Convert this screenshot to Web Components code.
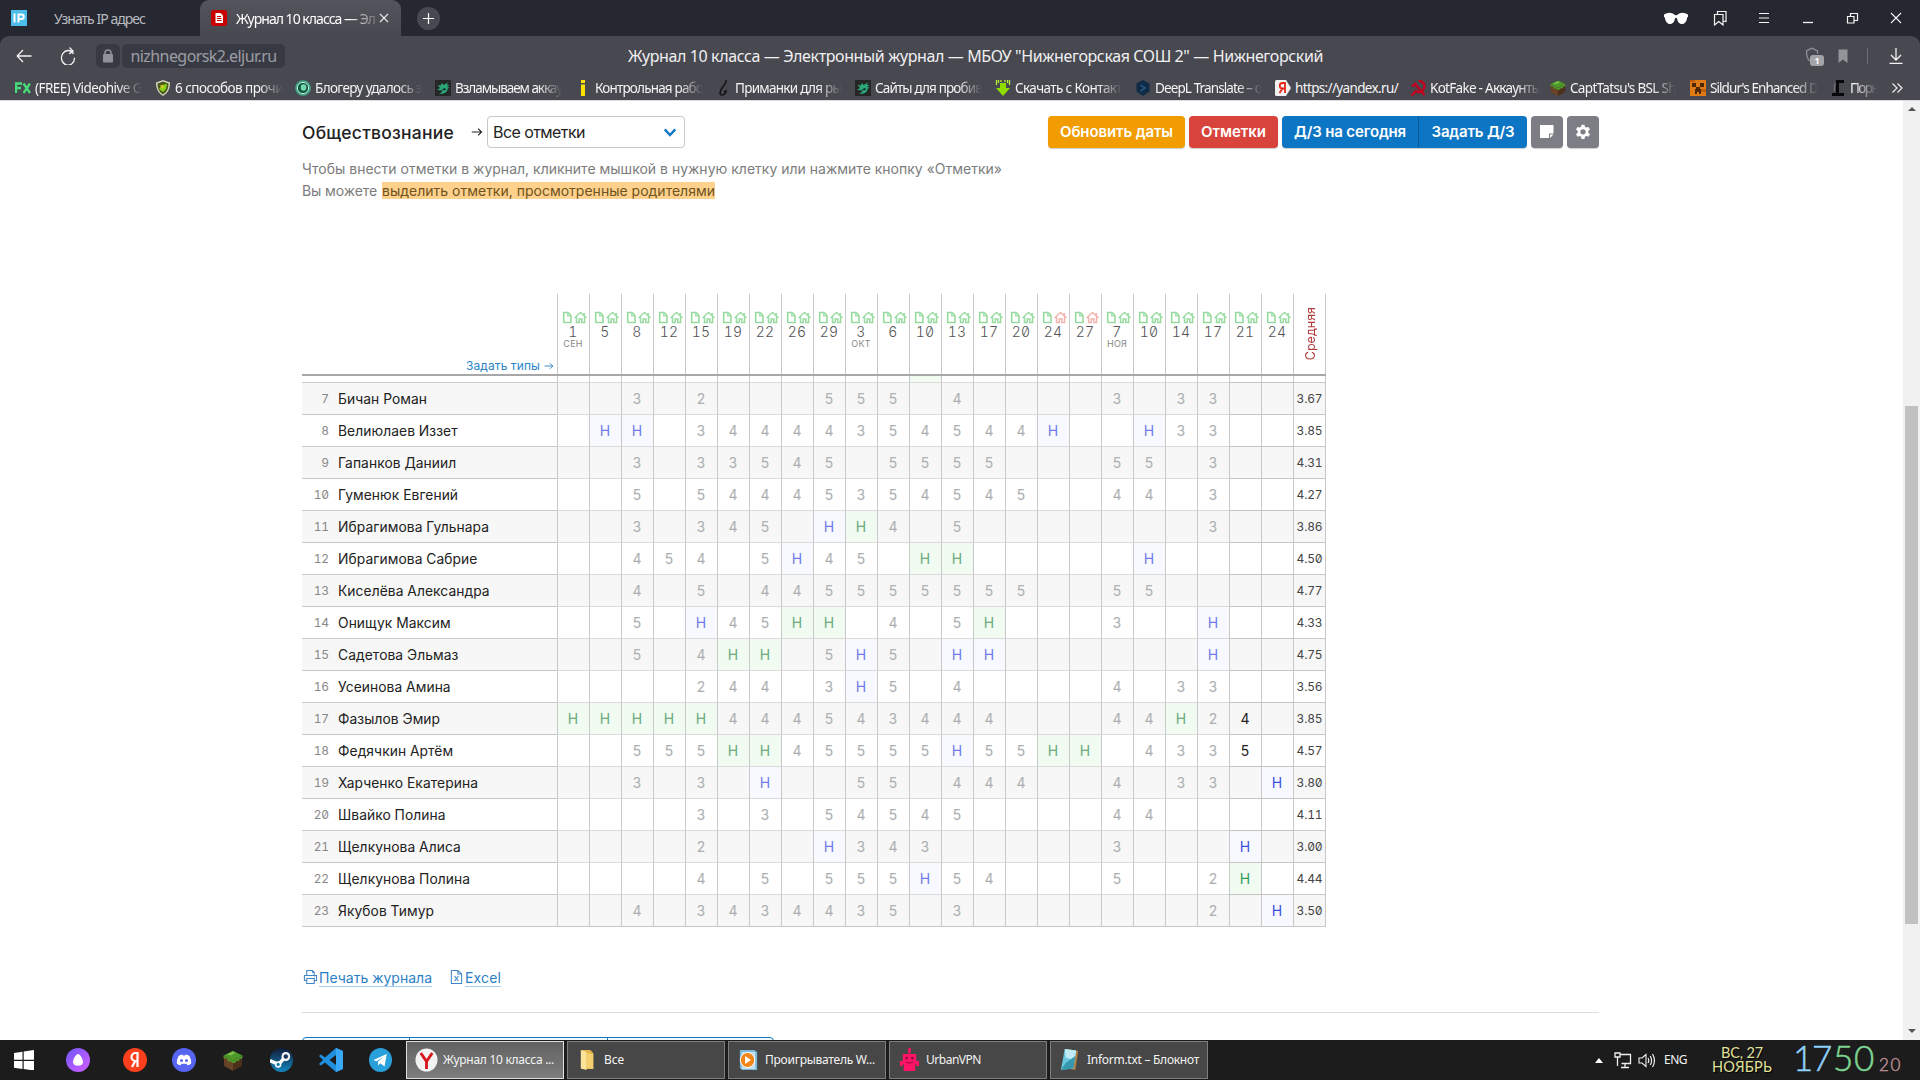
<!DOCTYPE html>
<html lang="ru">
<head>
<meta charset="utf-8">
<title>Журнал 10 класса</title>
<style>
html,body{margin:0;padding:0;background:#fff;overflow:hidden}
body{width:1920px;height:1080px;font-family:"Noto Sans","Open Sans",sans-serif}
</style>
</head>
<body>
<desktop-screen></desktop-screen>
<script>
const define=(name,html,init)=>customElements.define(name,class extends HTMLElement{
  connectedCallback(){
    if(this.shadowRoot)return;
    this.attachShadow({mode:'open'}).innerHTML=typeof html==='function'?html(this):html;
    if(init)init(this);
  }
});

/* ---------- icon set ---------- */
const eye='<rect width="16" height="16" fill="#262626"/><path d="M2.500 5l3 .5L7 3l1.500 2L13 2.500 12 5l2.500 0L12 7l2.500.5-2 1.500c0 3.500-4 5.500-8.500 4.500 2.500-.7 3.500-2 3.500-3L2 10l3-2z" fill="#2aa878"/><path d="M7 9.500l3-1.500 1 1.500-2 1z" fill="#123"/>';
const cube=(t,l,r)=>`<path d="M8 .5l7.500 3.700L8 8 .5 4.200z" fill="${t}"/><path d="M.5 4.200L8 8v8L1 12.200z" fill="${l}"/><path d="M15.500 4.200L8 8v8l7-3.800z" fill="${r}"/><path d="M.5 4.200L8 8l7.500-3.800v2L13 7v1.500l-2-.5-1 1.500L8 10 6 8.500 4.500 9 3 6.500.5 6z" fill="${t}"/><path d="M3 3.500l5-2.300 2 1-4 2z" fill="#7cc04a"/>`;
const ICONS={
 ip:'<rect width="16" height="16" fill="#4dbdea"/><path d="M3.500 3.500v9M7.500 12.500v-8h3a2.200 2.200 0 010 4.500h-3" fill="none" stroke="#fff" stroke-width="2"/>',
 journal:'<rect width="16" height="16" rx="2.500" fill="#c90000"/><path d="M4.500 3h5L12 5.500V13H4.500z" fill="#fff"/><path d="M6 6.500h4M6 8.500h4.500M6 10.500h4.500" stroke="#c90000"/>',
 x:'<path d="M4 4l8 8M12 4l-8 8" stroke="#e8e8ea" stroke-width="1.100"/>',
 back:'<path d="M15.500 8H1.500M7 2L1.200 8 7 14" fill="none" stroke="#f2f2f2" stroke-width="1.300"/>',
 reload:'<path d="M13.500 6.200A6.500 6.500 0 1 0 14.500 9.500M9.500.5l3.500 3.200-3.800 2.500" fill="none" stroke="#f2f2f2" stroke-width="1.300"/>',
 lock:'<rect x="3" y="6" width="10" height="8.500" rx="1" fill="#90929a"/><path d="M5 6.500V5a3 3 0 016 0v1.500" fill="none" stroke="#90929a" stroke-width="1.500"/>',
 fxs:'<path d="M1 13V3.500h6M1 8h5M8.500 3.500L15 13M15 3.500L8.500 13" fill="none" stroke="#45dc79" stroke-width="2.300"/>',
 shield:'<path d="M8 0l7 2.500c0 6-2 10.500-7 13.500C3 13 1 8.500 1 2.500z" fill="#d8d8c0"/><path d="M8 1.500l5.500 2c0 5-1.600 8.500-5.500 11-3.900-2.500-5.500-6-5.500-11z" fill="#4a5a1c"/><path d="M4 9L7 5l5-1-1 5-3 3z" fill="#87d51b"/><path d="M5 5l4 1-2 3z" fill="#e5c429"/>',
 orb:'<circle cx="8" cy="8" r="7.800" fill="#3fa983"/><circle cx="8" cy="8" r="6" fill="#0a5742"/><circle cx="8" cy="8" r="5.600" fill="none" stroke="#d1eee2"/><ellipse cx="8.500" cy="7.500" rx="2.800" ry="3.300" fill="#74d6ac"/>',
 eye,
 yel:'<path d="M6 0h4v3H6zM6 4.500h4V16H6z" fill="#ffe100"/>',
 hook:'<path d="M11 0c1 3-2 5-4 8s-3 7 0 7 4-3 4-4l-2 1" fill="none" stroke="#17171a" stroke-width="1.700"/>',
 down:'<path d="M5 3h6v5h4l-7 8-7-8h4z" fill="#8edc00"/><path d="M1.500 0v5M3.500 0v3M6 0v2M10 0v2M12.500 0v3M14.500 0v5" stroke="#b4ef39" stroke-width="1.300"/>',
 deepl:'<path d="M8 0l6.500 3.500v8L8 16l-6.500-4.500v-8z" fill="#0f2b46"/><path d="M5.500 5l4.500 3-4.500 3" fill="none" stroke="#2c618e" stroke-width="1.400"/>',
 yandex:'<path d="M0 1.500Q0 0 1.500 0H11l5 8-5 8H1.500Q0 16 0 14.500z" fill="#f1f1f1"/><path d="M10 13V3H7.500a2.500 2.500 0 000 5.500H10M7.500 8.500L4.500 13" fill="none" stroke="#e8271b" stroke-width="1.800"/>',
 sickle:'<path d="M8.500.5c6 1 7.500 6 4.500 9.500-2 2.500-5 2.500-7 1l-4.500 4.500M5 4l9.500 11M2 6.500L6.500 3" fill="none" stroke="#c5001f" stroke-width="2.300"/>',
 block:cube('#4d9a2b','#6a4427','#4d301c'),
 creeper:'<rect width="16" height="16" fill="#e07a14"/><path d="M0 0h5v2H0zM10 9h6v3h-6z" fill="#c05f0b"/><path d="M2 3h4v4H2zM10 3h4v4h-4zM6 7h4v2H6zM5 9h6v5H9v-2H7v2H5z" fill="#4c2803"/>',
 pipe:'<path d="M14 1.500H7.500v9.500M2 14.500h12M7.500 10v4" fill="none" stroke="#08080a" stroke-width="3"/><path d="M5 3l-1 8" stroke="#777"/>',
 chevs:'<path d="M3.500 3.500L8 8l-4.500 4.500M8.500 3.500L13 8l-4.500 4.500" fill="none" stroke="#eee" stroke-width="1.200"/>',
 glasses:'<path d="M0 3.500Q6-.0 11 4q1 .6 2 0Q18 0 24 3.500V6c-.5 0-1 .5-1 1.500-.5 3.500-2.500 5.500-5 5.500-3 0-4.500-2.500-5-5.500-.3-1-1.700-1-2 0-.5 3-2 5.500-5 5.500-2.500 0-4.500-2-5-5.500C1 6.500.5 6 0 6z" fill="#fff"/>',
 marks:'<path d="M5.500 4V1.500H14v10l-3-.5M2.500 4.500H11V15l-4.200-3.500L2.500 15z" fill="none" stroke="#f4f4f4" stroke-width="1.200"/>',
 menu:'<path d="M3 3.500h10M3 8h10M3 12.500h10" stroke="#f4f4f4" stroke-width="1.200"/>',
 min:'<path d="M3 12.500h10" stroke="#f4f4f4" stroke-width="1.300"/>',
 restore:'<path d="M6.500 6V3.500h7v7H10M3.500 6.500h6.500v6.500H3.500z" fill="none" stroke="#f4f4f4" stroke-width="1.200"/>',
 close:'<path d="M3 3l10 10M13 3L3 13" stroke="#f4f4f4" stroke-width="1.100"/>',
 prot:'<path d="M8 1l5.500 2.500v2.500M8 1L2.500 3.500c0 4 .5 7 3.500 9" fill="none" stroke="#92939a" stroke-width="1.200"/>',
 mark:'<path d="M3.500 1.500h9V15L8 11.500 3.500 15z" fill="#93949a"/>',
 dl:'<path d="M8 0v11.500M3 7l5 5 5-5M1.500 15.300h13" fill="none" stroke="#f2f2f2" stroke-width="1.300"/>',
 note:'<path d="M1 1h13.500v8.500H10V14H1z" fill="#fff"/><path d="M11 10.500h3.500L11 14z" fill="#fff"/>',
 gear:'<path d="M6.700 1h2.600l.4 1.900 1.300.7 1.900-.6 1.300 2.200-1.500 1.300v1.700l1.500 1.300-1.300 2.200-1.900-.6-1.300.7-.4 1.900H6.700l-.4-1.900-1.300-.7-1.900.6-1.300-2.200 1.500-1.300V6.500L1.800 5.200 3.100 3l1.900.6 1.300-.7zM8 5a2.300 2.300 0 100 4.700A2.300 2.300 0 008 5z" fill="#fff" fill-rule="evenodd" transform="translate(0 .5)"/>',
 doc:'<path d="M1.700 1.500h4.500L9 4.500v7H1.700z" fill="none" stroke="currentColor" stroke-width="1.600"/><path d="M5.800 1.500v3.300H9" fill="none" stroke="currentColor" stroke-width="1.300"/>',
 house:'<path d="M.5 7L6.500 1.500 12.500 7M2.500 6v5.400h2.700V8h2.600v3.400h2.700V6M10.300 2v2.500" fill="none" stroke="currentColor" stroke-width="1.500"/>',
 printer:'<path d="M4 6V1.500h6l2 2V6M4 11.500H1.500V6.500h13v5H12M4 9.500h8v5H4z" fill="none" stroke="#3e86c6" stroke-width="1.100"/><path d="M10 1.500v2h2M12 8h1" stroke="#3e86c6" fill="none"/>',
 excel:'<path d="M2.500 1.500h7l4 3.500v9.500h-11z M9.500 1.500V5h4" fill="none" stroke="#3e86c6" stroke-width="1.100"/><path d="M6 7l4 5M10 7l-4 5" stroke="#3e86c6" stroke-width="1.200"/>',
 win:'<path d="M0 3l8.500-1.200v8H0zM9.700 1.600L20 0v9.700H9.700zM0 11h8.500v8L0 17.800zM9.700 11H20v9.500l-10.300-1.500z" fill="#fff"/>',
 alice:'<defs><linearGradient id="a" x1="0" y1="0" x2="1" y2="1"><stop offset="0" stop-color="#6b55f5"/><stop offset=".5" stop-color="#a55bff"/><stop offset="1" stop-color="#d05cff"/></linearGradient></defs><circle cx="12" cy="12" r="12" fill="url(#a)"/><path d="M12 6c2 0 5 5.500 5 8s-2 3.700-5 3.700S7 16.500 7 14s3-8 5-8z" fill="#fff"/>',
 yared:'<circle cx="12" cy="12" r="12" fill="#fc3f1d"/><path d="M14.500 19V5h-2a4 4 0 000 8h2M12.300 13L9 19" fill="none" stroke="#fff" stroke-width="2.200"/>',
 discord:'<circle cx="12" cy="12" r="12" fill="#5865f2"/><path d="M6.500 8q2-1.500 4-1.500l.5 1h2l.5-1q2 0 4 1.500 2 4 1.700 7.500-1.700 1.500-3.700 1.700l-.9-1.500H9.400l-.9 1.500q-2-.2-3.700-1.700Q4.500 12 6.500 8z" fill="#fff"/><circle cx="9.500" cy="12.500" r="1.500" fill="#5865f2"/><circle cx="14.500" cy="12.500" r="1.500" fill="#5865f2"/>',
 steam:'<defs><linearGradient id="s" x1="0" y1="0" x2="0" y2="1"><stop offset="0" stop-color="#101b38"/><stop offset="1" stop-color="#1688c0"/></linearGradient></defs><circle cx="12" cy="12" r="12" fill="url(#s)"/><path d="M0 12.500l9 4 5-5.500" fill="none" stroke="#fff" stroke-width="3.500"/><circle cx="16.500" cy="8.500" r="4.500" fill="#fff"/><circle cx="16.500" cy="8.500" r="2.700" fill="#18305a" stroke="#fff" stroke-width=".8"/><circle cx="8.500" cy="16.500" r="3.300" fill="#fff"/><circle cx="8.500" cy="16.500" r="1.700" fill="#187bb0"/>',
 code:'<path d="M17 0l7 3v18l-7 3L6 14.500 2 17.500 0 16l4-4-4-4 2-1.500 4 3zM17 7l-6.500 5 6.500 5z" fill="#1f8fe0" fill-rule="evenodd"/><path d="M17 0l7 3v18l-7 3z" fill="#3aa9f5"/>',
 tg:'<circle cx="12" cy="12" r="12" fill="#29a0da"/><path d="M4.500 12L18.500 6l-2.300 12.500-4.500-3.200-2.300 2.200v-4l6-5-7.500 4.700z" fill="#fff"/>',
 ybro:'<circle cx="12" cy="12" r="11.500" fill="#f2f2f2"/><path d="M6 5l6 8.500V21M18 5l-6 8.500" fill="none" stroke="#d8171c" stroke-width="3"/>',
 folder:'<path d="M6 2h9l3 3v16H6z" fill="#e3b64c"/><path d="M5 2l6 2v18l-6-1.500z" fill="#fbe39a"/><path d="M11 5l7 1v15l-7-1z" fill="#f3cf70"/>',
 player:'<path d="M3 2h15l3 2v18H5l-2-2z" fill="#7bb8dc"/><path d="M5 4h14v17H5z" fill="#c3dfee"/><circle cx="11" cy="12" r="7.500" fill="#f08519" stroke="#fff"/><path d="M8.500 8l6 4-6 4z" fill="#fff"/>',
 robot:'<path d="M11 0h2v6h-2zM5 6h14v7h3v5h-3v-2H18v7H6v-7H5v2H2v-5h3z" fill="#ff1466"/><circle cx="12" cy="2" r="1.700" fill="#ff1466"/><circle cx="9" cy="10" r="1.300" fill="#8b0a3a"/><circle cx="15" cy="10" r="1.300" fill="#8b0a3a"/><path d="M8.500 14q3.500 2.500 7 0" stroke="#8b0a3a" fill="none"/>',
 notepad:'<path d="M8 1l12 2-3 19-12-2z" fill="#b6813d"/><path d="M6 1l12 1.500-3 18L2 22z" fill="#68c7dc"/><path d="M6 1l12 1.500-2 10-9-3z" fill="#c0ebf2"/><path d="M2 22l13-1.500L17 8 7 15z" fill="#3797af"/>',
 net:'<path d="M5.500 3.500h11v9h-9M11 12.500v4M7 16.500h8M1 2h5v4H1zM3.500 6v9" fill="none" stroke="#f0f0f0" stroke-width="1.300"/>',
 sound:'<path d="M1 6h3l4-3.500v12L4 11H1z" fill="none" stroke="#f0f0f0" stroke-width="1.100"/><path d="M10 6q1.500 2.500 0 5M12.200 4q2.800 4.500 0 9M14.500 2q4 6.500 0 13" fill="none" stroke="#f0f0f0" stroke-width="1.200"/>',
 chev:'<path d="M2 5l6 6.500L14 5" fill="none" stroke="#1179c4" stroke-width="2.800"/>',
 arrow:'<path d="M1 8h13M9.500 3.500L14 8l-4.500 4.500" fill="none" stroke="currentColor" stroke-width="1.500"/>'
};
define('ui-icon',el=>{
  const w=+el.getAttribute('w')||16,h=+el.getAttribute('h')||w,vb=el.getAttribute('box')||'0 0 16 16';
  return `<style>:host{display:block;flex:none;width:${w}px;height:${h}px}svg{display:block}</style><svg width="${w}" height="${h}" viewBox="${vb}" preserveAspectRatio="none">${ICONS[el.getAttribute('name')]}</svg>`;
});
const icon=(n,w=16,h=w,box='0 0 16 16',st='')=>`<ui-icon name="${n}" w="${w}" h="${h}" box="${box}" style="${st}"></ui-icon>`;
const fit=(t,w,st='')=>`<fit-text w="${w}" style="${st}">${t}</fit-text>`;

/* ---------- browser chrome ---------- */
define('tab-strip',`<style>
:host{display:flex;height:36px;background:#252830;color:#b9bac0;align-items:center;font-size:14px}
.t1{display:flex;width:189px;padding-left:11px;align-items:center;gap:27px}
.t2{display:flex;box-sizing:border-box;width:201px;height:36px;padding:0 8px 0 11px;background:linear-gradient(#54545c,#484850);border-radius:9px 9px 0 0;align-items:center;color:#fff}
.t2 fit-text{margin-left:9px;-webkit-mask-image:linear-gradient(90deg,#000 112px,transparent 146px)}
.t2 ui-icon:last-child{margin-left:1px}
.plus{width:23px;height:23px;border-radius:50%;background:#484950;margin-left:16px;display:flex;align-items:center;justify-content:center}
.r{margin-left:auto;display:flex;align-items:center;margin-right:16px}
</style><div class="t1">${icon('ip')}${fit('Узнать IP адрес',91)}</div>
<div class="t2">${icon('journal')}${fit('Журнал 10 класса — Эл',139)}${icon('x',16)}</div>
<div class="plus"><svg width="13" height="13"><path d="M6.500 1v11M1 6.500h11" stroke="#fff" stroke-width="1.200"/></svg></div>
<div class="r">${icon('glasses',24,14,'0 0 24 14')}${icon('marks',16,16,'0 0 16 16','margin-left:24px')}${icon('menu',16,16,'0 0 16 16','margin-left:28px')}${icon('min',16,16,'0 0 16 16','margin-left:28px')}${icon('restore',16,16,'0 0 16 16','margin-left:28px')}${icon('close',16,16,'0 0 16 16','margin-left:28px')}</div>`);

define('address-bar',`<style>
:host{display:flex;height:40px;align-items:center;background:#484850;border-radius:9px 9px 0 0;color:#f0f0f0}
.lock,.url{height:24px;border-radius:5px;background:#383a43;display:flex;align-items:center;justify-content:center}
.lock{width:24px;margin-left:20px}.url{width:163px;margin-left:2px;color:#9c9da5;font-size:16px}
.title{margin-left:343px;font-size:16px}
.r{margin-left:auto;display:flex;align-items:center;margin-right:16px}
.p{position:relative}.b{position:absolute;left:6px;top:8px;width:14px;height:11px;border-radius:3px;background:#a2a3a7;color:#fff;font:700 9px/11px "Noto Sans";text-align:center}
.d{width:1px;height:16px;background:#6c6d75;margin:0 20px 0 16px}
</style>${icon('back',16,16,'0 0 16 16','margin-left:16px')}${icon('reload',16,18,'0 0 16 16','margin-left:28px')}
<div class="lock">${icon('lock')}</div><div class="url">${fit('nizhnegorsk2.eljur.ru',146)}</div>
<div class="title">${fit('Журнал 10 класса — Электронный журнал — МБОУ "Нижнегорская СОШ 2" — Нижнегорский',695)}</div>
<div class="r"><div class="p">${icon('prot',16,18)}<div class="b">1</div></div>${icon('mark',16,16,'0 0 16 16','margin-left:15px')}<div class="d"></div>${icon('dl',16,16)}</div>`);

const marks=[['fxs','(FREE) Videohive G',107],['shield','6 способов прочи',108],['orb','Блогеру удалось з',107],['eye','Взламываем аккау',107],['yel','Контрольная рабо',108],['hook','Приманки для ры',107],['eye','Сайты для пробив',107],['down','Скачать с Контакт',107],['deepl','DeepL Translate – о',107],['yandex','https://yandex.ru/',103,135],['sickle','KotFake - Аккаунты',111],['block',"CaptTatsu's BSL Sh",106],['creeper',"Sildur's Enhanced D",108],['pipe','Порн',28,48]];
define('bookmark-bar',`<style>
:host{display:flex;height:24px;padding-left:15px;background:#484850;color:#f4f4f4;font-size:13.500px;align-items:center;border-bottom:1px solid #dcdce0}
.b{display:flex;gap:4px;align-items:center;overflow:hidden;height:24px}
.f fit-text{-webkit-mask-image:linear-gradient(90deg,#000 calc(100% - 24px),transparent)}
</style>${marks.map(([i,t,w,p=140])=>`<div class="b ${i=='yandex'?'':'f'}" style="width:${p}px">${icon(i)}${fit(t,w)}</div>`).join('')}<div style="margin-left:11px">${icon('chevs')}</div>`);

/* ---------- journal page ---------- */
define('ui-button',el=>`<style>:host{display:flex;align-items:center;justify-content:center;height:32px;border-radius:4px;color:#fff;font-weight:600;font-size:15px;box-shadow:0 1px 1px #0003;flex:none}</style><slot></slot>`);
define('page-tools',`<style>
:host{display:flex;height:32px;align-items:center;color:#222;flex:none}
.sel{box-sizing:border-box;width:198px;height:32px;border:1px solid #c8c8c8;border-radius:4px;margin-left:4px;padding:0 7px 0 5px;display:flex;align-items:center;justify-content:space-between;font-size:16px}
.r{margin-left:auto;display:flex;gap:4px}.g{display:flex}
.sel fit-text,ui-button fit-text{margin-top:-1px}
</style>${fit('Обществознание',152,'font-size:17.500px;font-weight:500;margin-top:1px')}${icon('arrow',12,12,'0 0 16 16','margin-left:17px')}
<div class="sel">${fit('Все отметки',92)}${icon('chev',14,14)}</div>
<div class="r"><ui-button style="background:#f19c00;width:137px">${fit('Обновить даты',113)}</ui-button><ui-button style="background:#d8443c;width:89px">${fit('Отметки',65)}</ui-button>
<div class="g"><ui-button style="box-sizing:border-box;background:#0d76c4;width:137px;border-radius:4px 0 0 4px;border-right:1px solid #0a5c99">${fit('Д/З на сегодня',112)}</ui-button><ui-button style="background:#0d76c4;width:108px;border-radius:0 4px 4px 0">${fit('Задать Д/З',83)}</ui-button></div>
<ui-button style="background:#7d7e85;width:32px">${icon('note')}</ui-button><ui-button style="background:#7d7e85;width:32px">${icon('gear',18)}</ui-button></div>`);

const days=['1 СЕН','5','8','12','15','19','22','26','29','3 ОКТ','6','10','13','17','20','24','27','7 НОЯ','10','14','17','21','24'];
define('journal-head',`<style>
:host{display:flex;height:80px;border-bottom:2px solid #a8a8a8;font-feature-settings:"tnum","zero"}
.n{width:255px;box-sizing:border-box;display:flex;align-items:flex-end;justify-content:flex-end;gap:4px;padding:0 3px 0 0;color:#2b84c8;font-size:12px;line-height:16px}
.n ui-icon{margin-bottom:3px}
.c{box-sizing:border-box;width:32px;border-left:1px solid #c8c8c8;padding:16px 1px 0 0;display:flex;flex-direction:column;align-items:center}
.i{display:flex;gap:1px;color:#98dba0;height:14px;align-items:center;margin-left:3px}
.d{font-size:14px;line-height:15px;color:#555;font-weight:350;letter-spacing:.2px}.m{font-size:9px;line-height:9px;color:#888;letter-spacing:.2px}
.a{box-sizing:border-box;width:33px;border:solid #c8c8c8;border-width:0 1px;display:flex;align-items:center;justify-content:center;color:#b23c3c;font-size:12.500px}
.a span{writing-mode:vertical-rl;transform:rotate(180deg);letter-spacing:0;margin-left:1px}
</style><div class="n">${fit('Задать типы',74)}${icon('arrow',10,10)}</div>${days.map((d,i)=>{const[a,b]=d.split(' ');return `<div class="c"><div class="i">${icon('doc',11,13,'0 0 11 13')}${icon('house',13,13,'0 0 13 13',(i==15||i==16)?'color:#f3b3ae':'')}</div><div class="d">${a}</div>${b?`<div class="m">${b}</div>`:''}</div>`}).join('')}<div class="a"><span>Средняя</span></div>`);

define('journal-row',el=>{
  const n=+el.getAttribute('no'),m=el.getAttribute('marks');
  const cell=(c,i)=>{
    const rec=i>20,k=c=='B'?'b':c=='G'?'g':'';
    return `<div class="c ${k} ${rec?'rec':''}">${c=='.'?'':k?'Н':c}</div>`};
  return `<style>
:host{display:flex;height:32px;background:${n%2?'#f7f7f7':'#fff'};font-feature-settings:"tnum","zero"}
.n{box-sizing:border-box;width:255px;border-top:1px solid #c8c8c8;display:flex;align-items:center;color:#222}
.no{width:27px;text-align:right;font-size:12px;color:#888;margin-right:9px;letter-spacing:-.1px}
.nm{font-size:13.800px;letter-spacing:.08px}
.c{box-sizing:border-box;width:32px;border-left:1px solid #c8c8c8;border-top:1px solid #dadada;padding-right:1px;display:flex;align-items:center;justify-content:center;font-size:14px;color:#adadad}
.b{background:#f8f9fe;color:#7279e6}.g{background:#f2fbf2;color:#6ba97c}
.rec{border-top-color:#c4c4c4;color:#222}.rec.b{color:#3b50dc}.rec.g{color:#2f9b5a}
.a{box-sizing:border-box;width:33px;border:1px solid #c8c8c8;border-bottom:0;display:flex;align-items:center;justify-content:center;font-size:12px;color:#444}
</style><div class="n"><span class="no">${n}</span><span class="nm"><slot></slot></span></div>${[...m].map(cell).join('')}<div class="a">${fit(el.getAttribute('avg'),26)}</div>`});

const rows=[
['Бичан Роман','..3.2...555.4....3.33..','3.67'],
['Велиюлаев Иззет','.BB.34444354544B..B33..','3.85'],
['Гапанков Даниил','..3.33545.5555...55.3..','4.31'],
['Гуменюк Евгений','..5.54445354545..44.3..','4.27'],
['Ибрагимова Гульнара','..3.345.BG4.5.......3..','3.86'],
['Ибрагимова Сабрие','..454.5B45.GG.....B....','4.50'],
['Киселёва Александра','..4.5.445555555..55....','4.77'],
['Онищук Максим','..5.B45GG.4.5G...3..B..','4.33'],
['Садетова Эльмаз','..5.4GG.5B5.BB......B..','4.75'],
['Усеинова Амина','....244.3B5.4....4.33..','3.56'],
['Фазылов Эмир','GGGGG444543444...44G24.','3.85'],
['Федячкин Артём','..555GG45555B55GG.4335.','4.57'],
['Харченко Екатерина','..3.3.B..55.444..4.33.B','3.80'],
['Швайко Полина','....3.3.54545....44....','4.11'],
['Щелкунова Алиса','....2...B343.....3...B.','3.00'],
['Щелкунова Полина','....4.5.555B54...5..2G.','4.44'],
['Якубов Тимур','..4.3434435.3.......2.B','3.50']];
define('journal-table',`<style>
:host{display:flex;flex:none;flex-direction:column;width:1024px;margin-top:92px;border-bottom:1px solid #c8c8c8}
.peek{display:flex;height:6px;padding-left:255px}.peek i{box-sizing:border-box;width:32px;border-left:1px solid #c8c8c8}.peek i:nth-child(12){background:#f2fbf2}.peek i:last-child{width:33px;border-right:1px solid #c8c8c8}
</style><journal-head></journal-head><div class="peek">${'<i></i>'.repeat(24)}</div>${rows.map((r,i)=>`<journal-row no="${i+7}" marks="${r[1]}" avg="${r[2]}">${r[0]}</journal-row>`).join('')}`);

define('journal-page',`<style>
:host{display:flex;height:939px;background:#fff;font-family:Inter,sans-serif;overflow:hidden}
.main{width:1297px;padding:15px 304px 0 302px;display:flex;flex-direction:column;flex:none}
.h{margin-top:10px;font-size:14px;line-height:22px;color:#7c7c7c;flex:none}
.h div{display:flex;height:22px;align-items:center}
.hl{background:#ffd18c;color:#6e5320;height:17px;line-height:17px;display:flex;margin:-1px 0 0 5px}
.l{display:flex;flex:none;margin-top:38px;height:24px;align-items:center;font-size:14px;color:#2d7fc4}
.l fit-text{border-bottom:1px solid #a9cdea;line-height:17px;margin-top:1px}
.hr{height:1px;flex:none;background:#ddd;margin-top:23px}
.box{margin-top:24px;width:470px;height:14px;border:1px solid #1578bd;border-radius:4px;background:#f3fafd;display:flex;flex:none}
.box i{border-right:1px solid #1578bd;box-sizing:border-box}
.sb{flex:1;background:#f1f1f1;display:flex;flex-direction:column;align-items:center}
.th{width:13px;height:518px;background:#c1c1c1;margin-top:295px}
.up,.dn{border:4px solid transparent;width:0;height:0}.up{border-bottom:4px solid #555;margin-top:2px}.dn{border-top:4px solid #555;margin-top:105px}
</style><div class="main"><page-tools></page-tools>
<div class="h"><div>${fit('Чтобы внести отметки в журнал, кликните мышкой в нужную клетку или нажмите кнопку «Отметки»',700)}</div><div>${fit('Вы можете',75)}<span class="hl">${fit('выделить отметки, просмотренные родителями',333)}</span></div></div>
<journal-table></journal-table>
<div class="l">${icon('printer',15,16,'0 0 16 16','margin-left:1px')}${fit('Печать журнала',113,'margin-left:1px')}${icon('excel',15,16,'0 0 16 16','margin-left:17px')}${fit('Excel',36,'margin-left:1px')}</div>
<div class="hr"></div><div class="box"><i style="width:107px"></i><i style="width:198px"></i></div></div>
<div class="sb"><div class="up"></div><div class="th"></div><div class="dn"></div></div>`);

/* ---------- taskbar ---------- */
const b24='0 0 24 24';
const tasks=[['ybro','Журнал 10 класса ...',111],['folder','Все',20],['player','Проигрыватель W...',110],['robot','UrbanVPN',55],['notepad','Inform.txt – Блокнот',112]];
define('task-bar',`<style>
:host{display:flex;height:40px;background:#1c1c1c;align-items:center;color:#f4f4f4;font-size:12px}
.q{display:flex;width:406px;box-sizing:border-box;padding-left:14px;align-items:center}
.w{display:flex;gap:3px}
.t{box-sizing:border-box;width:158px;height:38px;border:1px solid #7e7e7e;background:#474747;display:flex;align-items:center;gap:5px;padding-left:8px}
.t fit-text{margin-top:-1px}
.t:first-child{background:linear-gradient(#626262,#7d7d7d);border-color:#dedede}
.r{margin-left:auto;display:flex;align-items:center;width:325px;height:40px}
.date{margin-left:24px;width:62px;display:flex;flex-direction:column;align-items:center;color:#e0e29a;font:14.500px/14px Lato;text-shadow:1px 1px 1px #000}
.clk{display:flex;font-family:Lato;font-weight:300;-webkit-text-stroke:.5px currentColor;margin-left:20px;align-items:baseline;font-size:35px;line-height:40px;margin-top:1px}
</style><div class="q">${icon('win',20,20,'0 0 20 20')}${icon('alice',24,24,b24,'margin-left:32px')}${icon('yared',24,24,b24,'margin-left:33px')}${icon('discord',24,24,b24,'margin-left:25px')}${icon('block',20,21,'0 0 16 16','margin-left:27px')}${icon('steam',23,24,b24,'margin-left:27px')}${icon('code',24,24,b24,'margin-left:26px')}${icon('tg',23,24,b24,'margin-left:26px')}</div>
<div class="w">${tasks.map(t=>`<div class="t">${icon(t[0],23,24,b24)}${fit(t[1],t[2])}</div>`).join('')}</div>
<div class="r"><svg width="8" height="5"><path d="M0 5l4-5 4 5z" fill="#fff"/></svg>${icon('net',18,18,'0 0 18 18','margin-left:11px')}${icon('sound',18,17,'0 0 18 17','margin-left:6px')}${fit('ENG',23,'margin-left:8px;margin-top:-1px')}
<div class="date">${fit('ВС, 27',42)}${fit('НОЯБРЬ',60)}</div>
<div class="clk">${fit('17',38,'color:#8fd2fa')}${fit('50',42,'color:#7dd492;margin-left:2px')}${fit('20',23,'color:#b88b90;font-size:17px;margin-left:4px')}</div></div>`);

define('desktop-screen',`<style>:host{display:flex;flex-direction:column;width:1920px;height:1080px;overflow:hidden}
.c{background:#252830}</style><tab-strip></tab-strip><div class="c"><address-bar></address-bar></div><bookmark-bar></bookmark-bar><journal-page></journal-page><task-bar></task-bar>`);

/* Inline label whose tracking is set so that the text fills the width "w" */
define('fit-text','<style>:host{display:inline-block;white-space:nowrap;flex:none}span{display:inline-block;white-space:pre}</style><span><slot></slot></span>',el=>{
  const w=+el.getAttribute('w'),s=el.shadowRoot.querySelector('span'),n=el.textContent.length;
  s.style.letterSpacing=((w-s.getBoundingClientRect().width)/n).toFixed(3)+'px';
  el.style.width=w+'px';
});
</script>
</body>
</html>
